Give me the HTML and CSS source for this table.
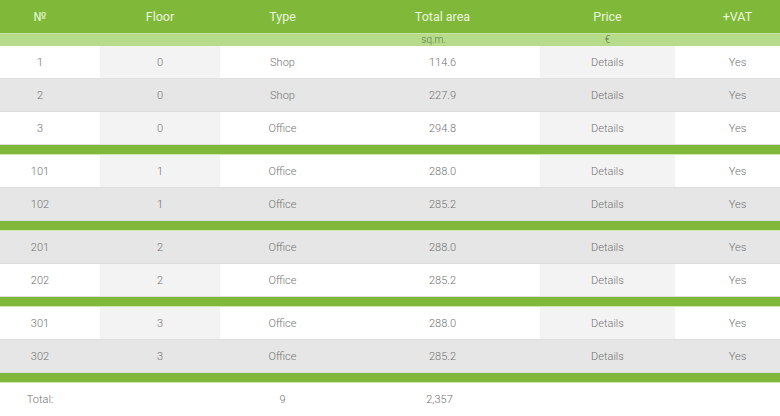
FILE: index.html
```html
<!DOCTYPE html>
<html>
<head>
<meta charset="utf-8">
<link rel="stylesheet" href="styles.css">
</head>
<body>
<table class="units">
  <colgroup>
    <col class="c-num"><col class="c-floor"><col class="c-type"><col class="c-area"><col class="c-price"><col class="c-vat">
  </colgroup>
  <thead>
    <tr class="head">
      <th class="num">№</th><th>Floor</th><th>Type</th><th>Total area</th><th>Price</th><th>+VAT</th>
    </tr>
    <tr class="units-row">
      <th></th><th></th><th></th><th class="unit-area">sq.m.</th><th>€</th><th></th>
    </tr>
  </thead>
  <tbody>
    <tr class="odd"><td class="num">1</td><td class="floor">0</td><td>Shop</td><td>114.6</td><td class="price">Details</td><td>Yes</td></tr>
    <tr class="even"><td class="num">2</td><td class="floor">0</td><td>Shop</td><td>227.9</td><td class="price">Details</td><td>Yes</td></tr>
    <tr class="odd"><td class="num">3</td><td class="floor">0</td><td>Office</td><td>294.8</td><td class="price">Details</td><td>Yes</td></tr>
    <tr class="sep"><td colspan="6"></td></tr>
    <tr class="odd"><td class="num">101</td><td class="floor">1</td><td>Office</td><td>288.0</td><td class="price">Details</td><td>Yes</td></tr>
    <tr class="even"><td class="num">102</td><td class="floor">1</td><td>Office</td><td>285.2</td><td class="price">Details</td><td>Yes</td></tr>
    <tr class="sep"><td colspan="6"></td></tr>
    <tr class="even"><td class="num">201</td><td class="floor">2</td><td>Office</td><td>288.0</td><td class="price">Details</td><td>Yes</td></tr>
    <tr class="odd"><td class="num">202</td><td class="floor">2</td><td>Office</td><td>285.2</td><td class="price">Details</td><td>Yes</td></tr>
    <tr class="sep"><td colspan="6"></td></tr>
    <tr class="odd"><td class="num">301</td><td class="floor">3</td><td>Office</td><td>288.0</td><td class="price">Details</td><td>Yes</td></tr>
    <tr class="even"><td class="num">302</td><td class="floor">3</td><td>Office</td><td>285.2</td><td class="price">Details</td><td>Yes</td></tr>
    <tr class="sep"><td colspan="6"></td></tr>
  </tbody>
  <tfoot>
    <tr class="total"><td class="num">Total:</td><td></td><td>9</td><td>2,357</td><td></td><td></td></tr>
  </tfoot>
</table>
</body>
</html>
```

FILE: styles.css
```css
html, body {
  margin: 0;
  padding: 0;
  background: #ffffff;
  overflow: hidden;
}
body {
  width: 780px;
  height: 416px;
}
.units {
  width: 800px;
  border-collapse: collapse;
  table-layout: fixed;
  font-family: Roboto, "Liberation Sans", sans-serif;
  font-weight: 300;
  color: #737373;
  font-size: 11px;
}
.c-num { width: 100px; }
.c-floor { width: 120px; }
.c-type { width: 125px; }
.c-area { width: 195px; }
.c-price { width: 135px; }
.c-vat { width: 125px; }

.units th, .units td {
  padding: 0;
  text-align: center;
  white-space: nowrap;
}
.units .num {
  padding-right: 20px;
}
.head th {
  height: 33px;
  background: #80b93a;
  color: #eaf6da;
  font-weight: 400;
  font-size: 12.5px;
}
.units-row th {
  height: 12px;
  background: #b6dc8b;
  color: #5f7a45;
  font-weight: 300;
  font-size: 10px;
  line-height: 12px;
  border-top: 1px solid #c6e4a2;
}
.units-row .unit-area {
  padding-right: 18px;
}
tbody td {
  height: 32px;
  border-bottom: 1px solid #dedede;
}
.odd td { background: #ffffff; }
.odd td.floor, .odd td.price { background: #f3f3f3; }
.even td { background: #e6e6e6; }
.sep td {
  height: 9px;
  background: #80b93a;
  border-top: 1px solid #b9dc8f;
  border-bottom: 1px solid #cfe8b3;
}
.total td {
  height: 33px;
  background: #ffffff;
  border-bottom: 1px solid #d3ebb8;
}
.total td:nth-child(4) {
  padding-right: 6px;
}
```
